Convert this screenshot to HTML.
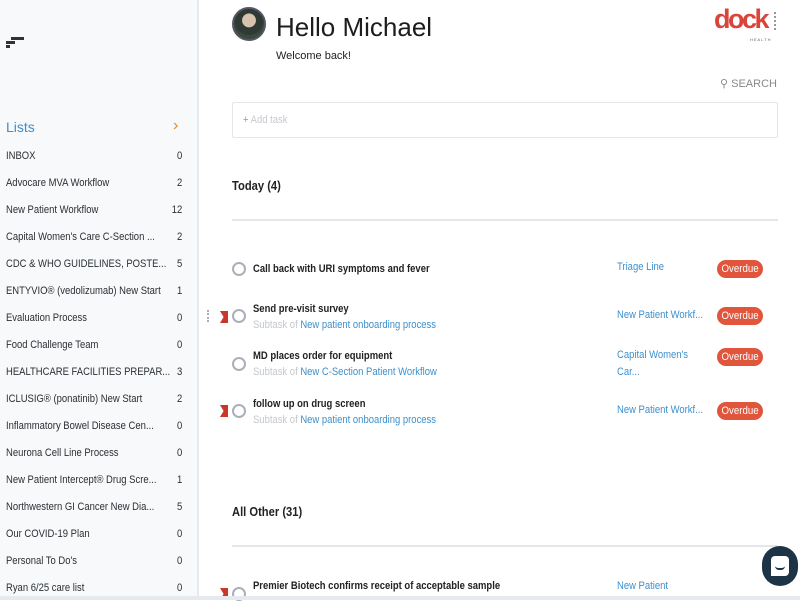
<!DOCTYPE html>
<html><head><meta charset="utf-8"><style>
*{margin:0;padding:0;box-sizing:border-box}
body{width:800px;height:600px;overflow:hidden;background:#fff;font-family:"Liberation Sans",sans-serif;position:relative}
.side{position:absolute;left:0;top:0;width:199px;height:600px;background:#f7f9fb;border-right:2px solid #e6e9ed}
.n{white-space:nowrap;transform:scaleX(0.86);transform-origin:0 0}
.row{position:absolute;left:6px;width:205px;font-size:11px;color:#2b2f33;display:flex;justify-content:space-between}
.abs{position:absolute}
.circ{position:absolute;width:14px;height:14px;border:2px solid #aab0b8;border-radius:50%}
.t{position:absolute;font-size:11px;font-weight:bold;color:#222}
.s{position:absolute;font-size:11px;color:#c3c8ce}
.s b{font-weight:normal;color:#3d8fcc}
.l{position:absolute;font-size:11px;color:#3d8fcc;line-height:17px}
.ov{position:absolute;left:717px;width:46px;height:18px;background:#e0553b;border-radius:9px;color:#fff;font-size:11px;text-align:center;line-height:18px}
.ov span{display:inline-block;transform:scaleX(0.88)}
.flag{position:absolute;left:220px;width:8px;height:12px;background:#c9382a;clip-path:polygon(0 0,100% 0,100% 100%,0 100%,45% 50%)}
</style></head><body>
<div class="side">
 <div class="abs" style="left:6px;top:41px;width:9px;height:3px;background:#333"></div>
 <div class="abs" style="left:11px;top:37px;width:13px;height:3px;background:#333"></div>
 <div class="abs" style="left:6px;top:45px;width:4px;height:3px;background:#333"></div>
 <div class="abs" style="left:6px;top:119px;font-size:14px;color:#3d8fcc">Lists</div>
 <div class="abs" style="left:173px;top:117px;font-size:16px;color:#e08a2a">›</div>
 <div class="row n" style="top:150px"><span>INBOX</span><span>0</span></div>
 <div class="row n" style="top:177px"><span>Advocare MVA Workflow</span><span>2</span></div>
 <div class="row n" style="top:204px"><span>New Patient Workflow</span><span>12</span></div>
 <div class="row n" style="top:231px"><span>Capital Women's Care C-Section ...</span><span>2</span></div>
 <div class="row n" style="top:258px"><span>CDC &amp; WHO GUIDELINES, POSTE...</span><span>5</span></div>
 <div class="row n" style="top:285px"><span>ENTYVIO® (vedolizumab) New Start</span><span>1</span></div>
 <div class="row n" style="top:312px"><span>Evaluation Process</span><span>0</span></div>
 <div class="row n" style="top:339px"><span>Food Challenge Team</span><span>0</span></div>
 <div class="row n" style="top:366px"><span>HEALTHCARE FACILITIES PREPAR...</span><span>3</span></div>
 <div class="row n" style="top:393px"><span>ICLUSIG® (ponatinib) New Start</span><span>2</span></div>
 <div class="row n" style="top:420px"><span>Inflammatory Bowel Disease Cen...</span><span>0</span></div>
 <div class="row n" style="top:447px"><span>Neurona Cell Line Process</span><span>0</span></div>
 <div class="row n" style="top:474px"><span>New Patient Intercept® Drug Scre...</span><span>1</span></div>
 <div class="row n" style="top:501px"><span>Northwestern GI Cancer New Dia...</span><span>5</span></div>
 <div class="row n" style="top:528px"><span>Our COVID-19 Plan</span><span>0</span></div>
 <div class="row n" style="top:555px"><span>Personal To Do's</span><span>0</span></div>
 <div class="row n" style="top:582px"><span>Ryan 6/25 care list</span><span>0</span></div>
</div>
<div class="abs" style="left:232px;top:7px;width:34px;height:34px;border-radius:50%;border:2px solid #556;background:radial-gradient(circle at 50% 38%,#d8c2b0 0 28%,#2f3a34 30% 60%,#3a4a3a 62%)"></div>
<div class="abs" style="left:276px;top:12px;font-size:26px;color:#1d1d1f">Hello Michael</div>
<div class="abs" style="left:276px;top:50px;font-size:11px;color:#222">Welcome back!</div>
<div class="abs" style="left:714px;top:4px;font-size:27px;font-weight:bold;color:#d9453a;letter-spacing:-2.5px">dock</div>
<div class="abs" style="left:774px;top:12px;width:3px;height:18px;border-left:2px dotted #999"></div>
<div class="abs" style="left:750px;top:37px;font-size:4px;color:#666;letter-spacing:1px">HEALTH</div>
<div class="abs" style="left:720px;top:77px;font-size:11px;color:#888">&#9906; SEARCH</div>
<div class="abs" style="left:232px;top:102px;width:546px;height:36px;border:1px solid #e3e6ea;border-radius:2px"></div>
<div class="abs n" style="left:243px;top:114px;font-size:11px;color:#c5c9cf"><span style="color:#e08a2a">+</span> Add task</div>
<div class="abs n" style="left:232px;top:178px;font-size:13px;font-weight:bold;color:#222">Today (4)</div>
<div class="abs" style="left:232px;top:219px;width:546px;height:2px;background:#e3e6ea"></div>
<div class="circ" style="left:232px;top:262px"></div>
<div class="t n" style="left:253px;top:263px">Call back with URI symptoms and fever</div>
<div class="l n" style="left:617px;top:259px">Triage Line</div>
<div class="ov" style="top:260px"><span>Overdue</span></div>
<div class="abs" style="left:207px;top:310px;width:2px;height:12px;border-left:2px dotted #aab"></div>
<div class="flag" style="top:311px"></div>
<div class="circ" style="left:232px;top:309px"></div>
<div class="t n" style="left:253px;top:303px">Send pre-visit survey</div>
<div class="s n" style="left:253px;top:319px">Subtask of <b>New patient onboarding process</b></div>
<div class="l n" style="left:617px;top:307px">New Patient Workf...</div>
<div class="ov" style="top:307px"><span>Overdue</span></div>
<div class="circ" style="left:232px;top:357px"></div>
<div class="t n" style="left:253px;top:350px">MD places order for equipment</div>
<div class="s n" style="left:253px;top:366px">Subtask of <b>New C-Section Patient Workflow</b></div>
<div class="l n" style="left:617px;top:347px">Capital Women's<br>Car...</div>
<div class="ov" style="top:348px"><span>Overdue</span></div>
<div class="flag" style="top:405px"></div>
<div class="circ" style="left:232px;top:404px"></div>
<div class="t n" style="left:253px;top:398px">follow up on drug screen</div>
<div class="s n" style="left:253px;top:414px">Subtask of <b>New patient onboarding process</b></div>
<div class="l n" style="left:617px;top:402px">New Patient Workf...</div>
<div class="ov" style="top:402px"><span>Overdue</span></div>
<div class="abs n" style="left:232px;top:504px;font-size:13px;font-weight:bold;color:#222">All Other (31)</div>
<div class="abs" style="left:232px;top:545px;width:546px;height:2px;background:#e3e6ea"></div>
<div class="flag" style="top:588px"></div>
<div class="circ" style="left:232px;top:587px"></div>
<div class="t n" style="left:253px;top:580px">Premier Biotech confirms receipt of acceptable sample</div>
<div class="l n" style="left:617px;top:578px">New Patient</div>
<div class="abs" style="left:762px;top:546px;width:36px;height:40px;border-radius:18px;background:#1d3447"></div>
<div class="abs" style="left:771px;top:556px;width:18px;height:20px;background:#fff;border-radius:4px 4px 4px 0"></div>
<div class="abs" style="left:775px;top:566px;width:10px;height:4px;border-bottom:2px solid #1d3447;border-radius:0 0 5px 5px"></div>
<div class="abs" style="left:0;top:596px;width:800px;height:4px;background:#e6e9ed"></div>
</body></html>
